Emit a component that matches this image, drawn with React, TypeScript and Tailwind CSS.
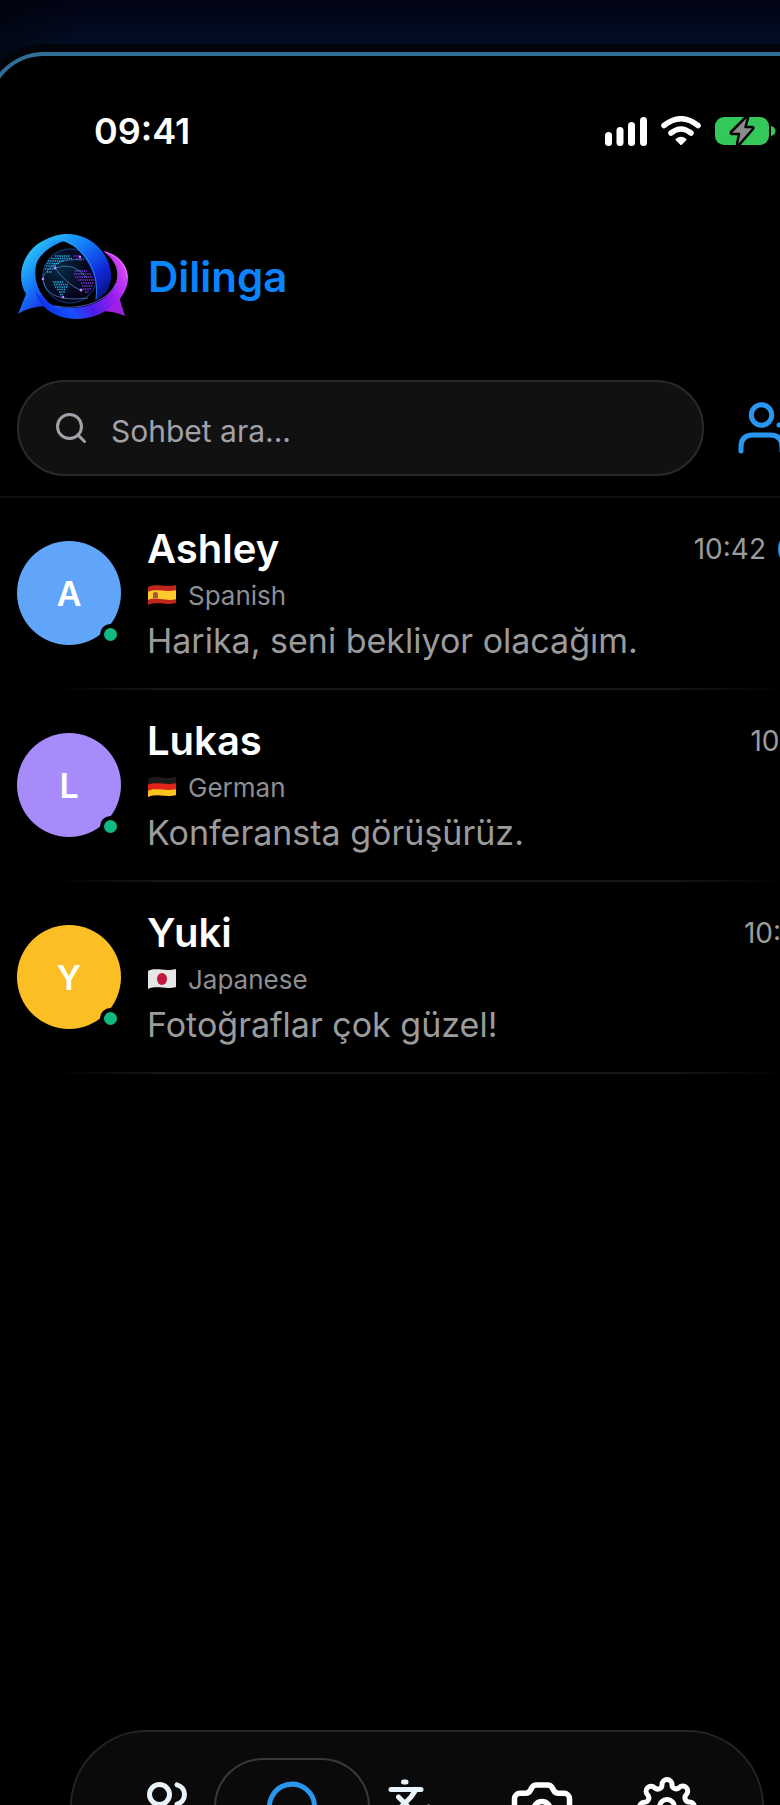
import { useId } from "react";
import { Camera, Languages, Search, Users } from "lucide-react";
import { FiSettings } from "react-icons/fi";

const chats = [
  { name: "Ashley", initial: "A", language: "Spanish", flag: "es", message: "Harika, seni bekliyor olacağım.", time: "10:42", unread: 2, color: "bg-[#60a5fa]" },
  { name: "Lukas", initial: "L", language: "German", flag: "de", message: "Konferansta görüşürüz.", time: "10:15", unread: 0, color: "bg-[#a78bfa]" },
  { name: "Yuki", initial: "Y", language: "Japanese", flag: "jp", message: "Fotoğraflar çok güzel!", time: "10:08", unread: 0, color: "bg-[#fbbf24]" },
];

function SignalIcon() {
  return (
    <svg viewBox="0 0 42 29" className="h-[29px] w-[42px] fill-white" aria-hidden="true">
      <rect x="0" y="15" width="7" height="14" rx="3.5" />
      <rect x="11.5" y="10" width="7" height="19" rx="3.5" />
      <rect x="23" y="5" width="7" height="24" rx="3.5" />
      <rect x="35" y="0" width="7" height="29" rx="3.5" />
    </svg>
  );
}

function WifiIcon() {
  return (
    <svg viewBox="0 0 40 30" className="h-[30px] w-10" fill="none" stroke="white" strokeWidth="5.5" strokeLinecap="round" aria-hidden="true">
      <path d="M3 9.500 Q20 -4 37 9.500" />
      <path d="M10 17 Q20 9 30 17" />
      <path d="M15.500 23.500 Q20 20 24.500 23.500 L20 28 Z" fill="white" strokeWidth="2" strokeLinejoin="round" />
    </svg>
  );
}

function BatteryIcon() {
  return (
    <svg viewBox="0 0 61 30" className="h-[30px] w-[61px]" aria-hidden="true">
      <rect x="0" y="1" width="54" height="28" rx="9" fill="#34c759" />
      <path d="M56 10 C62 11 62 19 56 20 Z" fill="#34c759" />
      <path d="M31 1 L16 16 Q15 18 18 18 L24 18 L22 28 Q22 30 24 29 L38 13 Q39 11 37 11 L30.500 11 L33 2 Q33 0 31 1 Z" fill="#8a8a8a" stroke="black" strokeWidth="2.5" strokeLinejoin="round" />
    </svg>
  );
}

function Logo() {
  const id = useId();
  return (
    <svg viewBox="0 0 110 88" className="h-[88px] w-[110px]" role="img" aria-label="Dilinga">
      <defs>
        <linearGradient id={`${id}left`} x1="0" y1="0.1" x2="0.7" y2="1">
          <stop offset="0" stopColor="#36e0f5" />
          <stop offset="0.45" stopColor="#1687fa" />
          <stop offset="0.8" stopColor="#1a35e8" />
          <stop offset="1" stopColor="#0b1680" />
        </linearGradient>
        <linearGradient id={`${id}front`} x1="0" y1="0" x2="0.8" y2="1">
          <stop offset="0" stopColor="#26c8f5" />
          <stop offset="0.4" stopColor="#1379f7" />
          <stop offset="0.75" stopColor="#1029d8" />
          <stop offset="1" stopColor="#0a1283" />
        </linearGradient>
        <linearGradient id={`${id}ring`} gradientUnits="userSpaceOnUse" x1="18" y1="74" x2="110" y2="34">
          <stop offset="0" stopColor="#0c2be0" />
          <stop offset="0.3" stopColor="#1550ff" />
          <stop offset="0.5" stopColor="#4a1fe8" />
          <stop offset="0.75" stopColor="#9a1cf0" />
          <stop offset="1" stopColor="#dc50fa" />
        </linearGradient>
        <radialGradient id={`${id}globe`} cx="0.35" cy="0.4">
          <stop offset="0" stopColor="#06283f" />
          <stop offset="1" stopColor="#04041a" />
        </radialGradient>
      </defs>

      {/* globe */}
      <circle cx="52" cy="43" r="28" fill={`url(#${id}globe)`} />
      <circle cx="52" cy="43" r="27" fill="none" stroke="#1768c9" strokeWidth="0.8" opacity="0.7" />
      <g fill="none" stroke="#25a9dd" strokeWidth="1.4" strokeDasharray="1.4 0.8">
        <path d="M37 23H52M33 25.500H54M30 28H46M29 30.500H41M28 33H38M27 36H35M29 39H34" />
        <path d="M35 49H45M36 51.500H50M37 54H50M39 56.500H48M41 59H47M42 61.500H45" />
      </g>
      <g fill="none" stroke="#7d35dd" strokeWidth="1.4" strokeDasharray="1.4 0.8">
        <path d="M56 23H63M58 26H66M57 38H69M56 41H73M57 44H75M60 47H76M63 50H76M64 53H75M65 56H73M67 59H71" />
      </g>
      <path d="M24 46 Q34 24 64 27 M37 35 Q47 50 64 58 M37 35 Q55 28 69 45 M25 48 Q30 70 70 65" fill="none" stroke="#58a9f0" strokeWidth="0.6" />
      <g fill="#b98cff">
        <circle cx="62" cy="24" r="1.300" />
        <circle cx="37" cy="35" r="1.500" />
        <circle cx="25" cy="46" r="1.300" />
        <circle cx="63" cy="57" r="1.500" />
        <circle cx="45" cy="64" r="1.300" />
      </g>

      {/* left bubble and its tail */}
      <path d="M0 81 L8 61 C-1 47 3 27 15 15 C25 5 39 2 53 6 C39 9 25 17 19 29 C14 45 20 62 35 73 Q13 72 0 81 Z" fill={`url(#${id}left)`} />
      {/* front ribbon */}
      <path d="M26 8 C44 -4 69 0 83 17 C94 30 96 46 89 58 Q85 63 77 68 C81 45 71 27 58 15 C48 7 36 5 26 8 Z" fill={`url(#${id}front)`} />
      <path d="M27 7 C38 4 48 5 58 14 C73 26 81 45 78 66" fill="none" stroke="#3d9dff" strokeWidth="0.8" opacity="0.8" />
      {/* ring that closes under the globe, with the right tail */}
      <path d="M101 64 L107 83 Q99 79 86 78 Z" fill="#a022e0" />
      <path d="M85 18 C101 21 110 33 110 45 C110 66 85 86 59 86 C38 86 21 75 17 57 C23 68 36 75 52 75 C74 75 92 65 98 50 C102 37 97 27 85 18 Z" fill={`url(#${id}ring)`} />
      <path d="M37 73 C65 78 91 67 98 50" fill="none" stroke="#6d8bff" strokeWidth="0.8" opacity="0.8" />
      <path d="M87 19 C103 24 109 35 109 45" fill="none" stroke="#ff9bff" strokeWidth="0.8" opacity="0.7" />
    </svg>
  );
}

function Flag({ country }: { country: string }) {
  const id = useId();
  return (
    <svg viewBox="0 0 30 22" className="h-[22px] w-[30px]" aria-hidden="true">
      <clipPath id={id}>
        <path d="M1 3 C10 -1 17 4 29 1 V19 C18 22 11 17 1 21 Z" />
      </clipPath>
      <g clipPath={`url(#${id})`}>
        {country === "es" && (
          <>
            <path d="M0 0H30V22H0Z" fill="#c0261c" />
            <path d="M0 8 C10 4 18 9 30 6 V15 C18 18 10 12 0 16 Z" fill="#fccb2a" />
            <path d="M6 9 Q8 7 11 9 V14 H6Z" fill="#a5583a" />
          </>
        )}
        {country === "de" && (
          <>
            <path d="M0 0H30V22H0Z" fill="#1c1c1c" />
            <path d="M0 9 C10 5 18 10 30 7 V22H0Z" fill="#e0241b" />
            <path d="M0 15 C10 11 18 16 30 13 V22H0Z" fill="#fcc41c" />
          </>
        )}
        {country === "jp" && (
          <>
            <path d="M0 0H30V22H0Z" fill="#e6e6e6" />
            <ellipse cx="15" cy="11" rx="5" ry="6" fill="#c2183f" />
          </>
        )}
      </g>
    </svg>
  );
}

function AddFriendIcon() {
  return (
    <svg viewBox="0 0 64 52" className="h-[52px] w-16" fill="none" stroke="#2997f0" strokeWidth="5" strokeLinecap="round" strokeLinejoin="round" aria-hidden="true">
      <circle cx="23.500" cy="13" r="10.200" />
      <path d="M3 49 V45 Q3 33 15 33 H32 Q44 33 44 45 V49 M41 23 H57 M49 15 V31" />
    </svg>
  );
}

function ChatIcon() {
  return (
    <svg viewBox="0 0 24 24" className="size-[60px]" fill="none" stroke="#2997f0" strokeWidth="2" strokeLinecap="round" strokeLinejoin="round" aria-hidden="true">
      <path d="M21 12a9 9 0 0 1-13 8L2 22l2-6A9 9 0 1 1 21 12Z" />
    </svg>
  );
}

const navItems = [
  { label: "Kişiler", icon: <Users size={60} color="#e8f3fa" />, active: false },
  { label: "Sohbetler", icon: <ChatIcon />, active: true },
  { label: "Çeviri", icon: <Languages size={60} color="#e8f3fa" />, active: false },
  { label: "Kamera", icon: <Camera size={66} />, active: false },
  { label: "Ayarlar", icon: <FiSettings size={60} />, active: false },
];

export default function App() {
  return (
    <div className="h-screen overflow-hidden bg-[linear-gradient(90deg,#00000066,transparent_80px),linear-gradient(180deg,#020314,#020d24_44px)] font-['Inter',sans-serif] text-white">
      <div className="-mr-[76px] -ml-[22px] pt-11">
        <div className="rounded-t-[66px] bg-[#030409] px-2 pt-2">
          <div className="rounded-t-[58px] border-4 border-b-0 border-[#316e95] bg-black">
            <main className="flex h-[calc(100vh-56px)] flex-col px-1">
              <div className="flex h-[150px] shrink-0 items-center justify-between pr-16 pl-[100px]">
                <span className="text-4xl font-semibold">09:41</span>
                <div className="flex items-center gap-[14px]">
                  <SignalIcon />
                  <WifiIcon />
                  <BatteryIcon />
                </div>
              </div>

              <header className="flex h-[142px] shrink-0 items-center gap-5 px-6">
                <Logo />
                <h1 className="text-[42px] leading-[48px] font-semibold text-[#0a84ff]">Dilinga</h1>
              </header>

              <div className="-mx-1 flex h-[150px] shrink-0 items-center gap-[34px] border-b-2 border-[#101010] pt-3 pr-[42px] pl-[27px]">
                <label className="flex h-24 grow items-center gap-[22px] rounded-full border-2 border-[#2a2a2a] bg-[#111] px-[34px] text-[#a1a1aa]">
                  <Search size={36} strokeWidth={2} className="shrink-0" aria-hidden="true" />
                  <input
                    className="w-full bg-transparent pt-1.5 text-[30px] outline-none placeholder:text-[#a1a1aa]"
                    type="search"
                    aria-label="Sohbet ara"
                    placeholder="Sohbet ara..."
                  />
                </label>
                <button type="button" aria-label="Arkadaş ekle">
                  <AddFriendIcon />
                </button>
              </div>

              <ul>
                {chats.map((chat) => (
                  <li key={chat.name}>
                    <a href="#" className="flex h-[190px] items-center gap-[26px] pr-6 pl-[23px]">
                      <div className={`relative flex size-[104px] shrink-0 items-center justify-center rounded-full text-[34px] font-semibold ${chat.color}`}>
                        {chat.initial}
                        <span className="absolute right-0 bottom-0 size-[21px] rounded-full border-4 border-black bg-[#10b981]" />
                      </div>
                      <div className="min-w-0 grow pt-1">
                        <div className="flex h-12 items-center justify-between">
                          <h2 className="text-[40px] leading-[48px] font-semibold">{chat.name}</h2>
                          <div className="flex items-center gap-3 text-[28px] text-[#9b9b9b]">
                            <time>{chat.time}</time>
                            {chat.unread > 0 && (
                              <span className="flex size-[38px] items-center justify-center rounded-full bg-[#2997f0] text-xl text-white">{chat.unread}</span>
                            )}
                          </div>
                        </div>
                        <div className="flex h-11 items-center gap-[11px] text-[26px] text-[#8e8e93]">
                          <Flag country={chat.flag} />
                          {chat.language}
                        </div>
                        <p className="text-[34px] leading-[48px] text-[#9b9b9b]">{chat.message}</p>
                      </div>
                    </a>
                    <div className="mx-14 h-0.5 bg-[linear-gradient(90deg,transparent,#161616_15%,#161616_85%,transparent)]" />
                  </li>
                ))}
              </ul>

              {/* the bar hangs over the bottom edge of the screen */}
              <nav className="mx-[76px] mt-auto -mb-[79px] flex h-[154px] shrink-0 items-center rounded-full border-2 border-[#242424] bg-[#0a0a0a] px-8">
                {navItems.map((item) => (
                  <button
                    key={item.label}
                    type="button"
                    aria-label={item.label}
                    className={
                      item.active
                        ? "-mx-4 flex h-[98px] w-[156px] shrink-0 items-center justify-center rounded-full border-2 border-[#3a3a3a]"
                        : "flex h-[98px] flex-1 items-center justify-center"
                    }
                  >
                    {item.icon}
                  </button>
                ))}
              </nav>
            </main>
          </div>
        </div>
      </div>
    </div>
  );
}
